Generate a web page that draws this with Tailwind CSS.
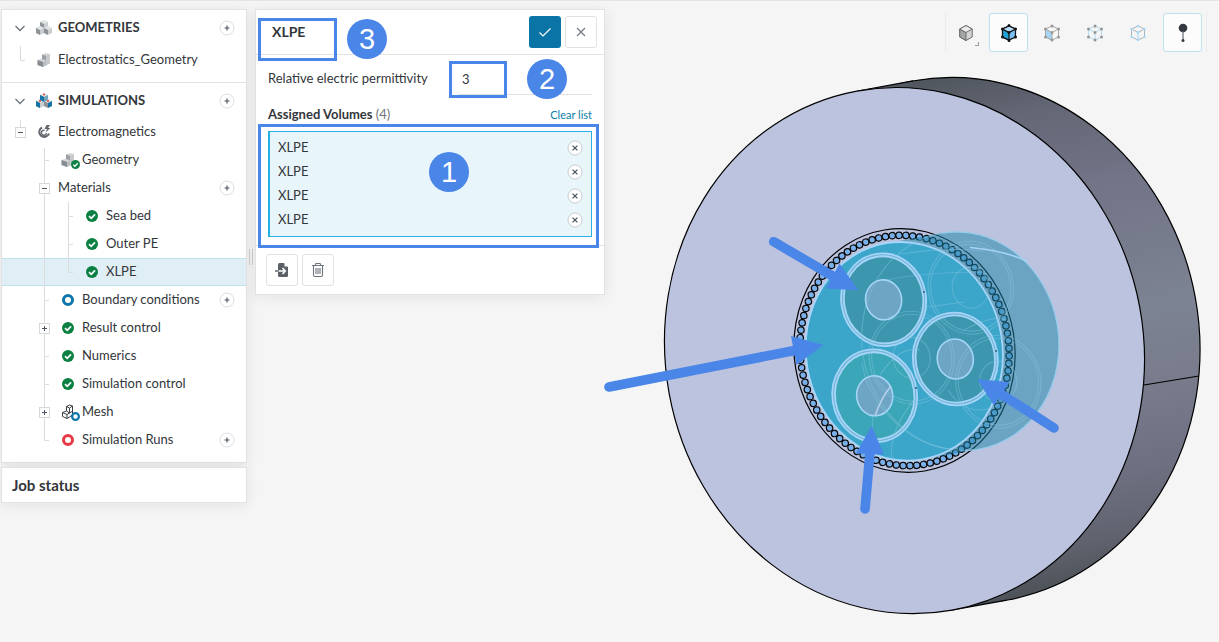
<!DOCTYPE html>
<html lang="en">
<head>
<meta charset="utf-8">
<meta name="viewport" content="width=device-width, initial-scale=1">
<title>Simulation workbench</title>
<script src="https://cdn.jsdelivr.net/npm/@tailwindcss/browser@4"></script>
</head>
<body class="min-h-screen bg-[#f5f5f5] font-['Lato',sans-serif] text-[13px] leading-4 text-[#33363b] border-t border-[#e4e4e4]">

<!-- Shared icon shapes -->
<svg class="hidden" aria-hidden="true">
  <symbol id="cube" viewBox="0 0 8 9"><path d="M4 0 8 2v5L4 9 0 7V2Z" fill="#c9cdcf"/><path d="M4 0 8 2 4 4 0 2Z" fill="#e3e6e7"/><path d="M0 2l4 2v5L0 7Z" fill="#8f9499"/></symbol>
  <symbol id="cubes" viewBox="0 0 16 16"><use href="#cube" x="4" y="0" width="8" height="9"/><use href="#cube" x="0" y="6" width="8" height="9"/><use href="#cube" x="8" y="6" width="8" height="9"/></symbol>
  <symbol id="part" viewBox="0 0 16 16"><path d="M6 2.500 10 1l4 1.300v9L7 15 1.500 13V8L6 6.500Z" fill="#d3d6d8"/><path d="M6 2.500l4 1.300v4.500L6 7Z" fill="#9aa0a5"/><path d="M10 3.800l4-1.500v9l-4 2.200Z" fill="#c6cacd"/><path d="M1.500 8 7 10v5l-5.500-2Z" fill="#878d93"/><path d="M7 10l3-1.500v5L7 15Z" fill="#b9bec1"/></symbol>
  <symbol id="ok" viewBox="0 0 12 12"><circle cx="6" cy="6" r="6" fill="#0b8043"/><path d="M3 6.200 5.200 8.300 9 4.300" fill="none" stroke="#fff" stroke-width="1.700"/></symbol>
  <symbol id="ring" viewBox="0 0 12 12"><circle cx="6" cy="6" r="4.500" fill="#fff" stroke="currentColor" stroke-width="3"/></symbol>
  <symbol id="plus" viewBox="0 0 16 16"><circle cx="8" cy="8" r="7" fill="#fff" stroke="#dcdee0"/><path d="M5.500 8h5M8 5.500v5" stroke="#4d5661" stroke-width="1.200"/></symbol>
  <symbol id="remove" viewBox="0 0 16 16"><circle cx="8" cy="8" r="7" fill="#fff" stroke="#c9cdd1"/><path d="m5.600 5.600 4.800 4.800m0-4.800-4.800 4.800" stroke="#4d5661" stroke-width="1.300"/></symbol>
  <symbol id="chev" viewBox="0 0 24 28"><path d="m7.500 12 4.500 4.500L16.500 12" fill="none" stroke="#6d747b" stroke-width="1.300"/></symbol>
  <!-- Tree guides -->
  <symbol id="tee" viewBox="0 0 24 28"><path d="M12.500 0v28M12.500 14.500H17" fill="none" stroke="#dcdcdc"/></symbol>
  <symbol id="bar" viewBox="0 0 24 28"><path d="M12.500 0v28" stroke="#dcdcdc"/></symbol>
  <symbol id="elbow" viewBox="0 0 24 28"><path d="M12.500 0v14.500H17" fill="none" stroke="#dcdcdc"/></symbol>
  <symbol id="boxm" viewBox="0 0 24 28"><rect x="7.500" y="9.500" width="10" height="10" fill="#fff" stroke="#d6d8da"/><path d="M10 14.500h5" stroke="#4d5661"/></symbol>
  <symbol id="boxp" viewBox="0 0 24 28"><rect x="7.500" y="9.500" width="10" height="10" fill="#fff" stroke="#d6d8da"/><path d="M10 14.500h5M12.500 12v5" stroke="#4d5661"/></symbol>
</svg>

<div class="relative flex min-h-[641px] items-start">

  <!-- Project tree -->
  <aside class="ml-px mt-2 w-[246px] shrink-0">
    <nav class="border border-[#e2e2e2] bg-white pb-2 shadow-[0_2px_14px_rgba(0,0,0,0.08)]">
      <div class="flex h-9 items-center pl-[6px] pr-[11px]">
        <svg class="h-7 w-6"><use href="#chev"/></svg>
        <span class="flex w-6 justify-center"><svg class="h-4 w-4"><use href="#cubes"/></svg></span>
        <span class="mb-0.5 ml-0.5 flex-1 font-bold">GEOMETRIES</span>
        <button class="h-4 w-4" aria-label="Add geometry"><svg class="h-4 w-4"><use href="#plus"/></svg></button>
      </div>
      <div class="mb-2 flex h-7 items-center pl-[6px]">
        <svg class="h-7 w-6"><use href="#elbow"/></svg>
        <span class="flex w-6 justify-center"><svg class="h-4 w-4"><use href="#part"/></svg></span>
        <a href="#" class="mb-0.5 ml-0.5">Electrostatics_Geometry</a>
      </div>
      <div class="flex h-9 items-center border-t border-[#e2e2e2] pl-[6px] pr-[11px]">
        <svg class="h-7 w-6"><use href="#chev"/></svg>
        <span class="flex w-6 justify-center"><svg class="h-4 w-4" viewBox="0 0 16 16"><use href="#cubes"/><path d="M4 2l4 2v5L4 7ZM0 8l4 2v5l-4-2ZM12 10l4-2v5l-4 2Z" fill="#1573a8"/><path d="M12 2 8 4v5l4-2Z" fill="#75a5bd"/><g fill="#e8402f"><circle cx="8" cy="1.500" r="1"/><circle cx="4" cy="8" r="1"/><circle cx="12" cy="8" r="1"/></g></svg></span>
        <span class="mb-0.5 ml-0.5 flex-1 font-bold">SIMULATIONS</span>
        <button class="h-4 w-4" aria-label="Add simulation"><svg class="h-4 w-4"><use href="#plus"/></svg></button>
      </div>
      <div class="flex h-7 items-center pl-[6px]">
        <svg class="h-7 w-6" viewBox="0 0 24 28"><path d="M12.500 2v8" stroke="#dcdcdc"/><use href="#boxm" width="24" height="28"/></svg>
        <span class="flex w-6 justify-center"><svg class="h-4 w-4" viewBox="0 0 16 16" fill="none" stroke="#63686e"><path d="M6 3.500A5 5 0 1 0 13 9.500" stroke-width="2"/><path d="M8.500 6.200a2.600 2.600 0 1 0 2 3" stroke-width="1.500"/><path d="M10.500 1 8.500 5h2.500L9.500 8.500 14.500 4H12l2-3Z" fill="#63686e" stroke="none"/></svg></span>
        <a href="#" class="mb-0.5 ml-0.5">Electromagnetics</a>
      </div>
      <div class="flex h-7 items-center pl-[30px]">
        <svg class="h-7 w-6" viewBox="0 0 24 28"><path d="M12.500 2v26M12.500 14.500H17" stroke="#dcdcdc" fill="none"/></svg>
        <span class="relative flex w-6 justify-center"><svg class="h-4 w-4"><use href="#part"/></svg><svg class="absolute right-0 top-2 h-[9px] w-[9px]"><use href="#ok"/></svg></span>
        <a href="#" class="mb-0.5 ml-0.5">Geometry</a>
      </div>
      <div class="flex h-7 items-center pl-[30px] pr-[11px]">
        <svg class="h-7 w-6" viewBox="0 0 24 28"><use href="#bar" width="24" height="28"/><use href="#boxm" width="24" height="28"/></svg>
        <a href="#" class="mb-0.5 ml-0.5 flex-1">Materials</a>
        <button class="h-4 w-4" aria-label="Add material"><svg class="h-4 w-4"><use href="#plus"/></svg></button>
      </div>
      <div class="flex h-7 items-center pl-[30px]">
        <svg class="h-7 w-6"><use href="#bar"/></svg><svg class="h-7 w-6"><use href="#tee"/></svg>
        <span class="flex w-6 justify-center"><svg class="h-3 w-3"><use href="#ok"/></svg></span>
        <a href="#" class="mb-0.5 ml-0.5">Sea bed</a>
      </div>
      <div class="flex h-7 items-center pl-[30px]">
        <svg class="h-7 w-6"><use href="#bar"/></svg><svg class="h-7 w-6"><use href="#tee"/></svg>
        <span class="flex w-6 justify-center"><svg class="h-3 w-3"><use href="#ok"/></svg></span>
        <a href="#" class="mb-0.5 ml-0.5">Outer PE</a>
      </div>
      <div class="flex h-7 items-center border-y border-[#bfdfec] bg-[#e0eef5] pl-[30px]">
        <svg class="h-7 w-6"><use href="#bar"/></svg><svg class="h-7 w-6"><use href="#elbow"/></svg>
        <span class="flex w-6 justify-center"><svg class="h-3 w-3"><use href="#ok"/></svg></span>
        <a href="#" class="mb-0.5 ml-0.5" aria-current="true">XLPE</a>
      </div>
      <div class="flex h-7 items-center pl-[30px] pr-[11px]">
        <svg class="h-7 w-6"><use href="#tee"/></svg>
        <span class="flex w-6 justify-center text-[#0f76ab]"><svg class="h-3 w-3"><use href="#ring"/></svg></span>
        <a href="#" class="mb-0.5 ml-0.5 flex-1">Boundary conditions</a>
        <button class="h-4 w-4" aria-label="Add boundary condition"><svg class="h-4 w-4"><use href="#plus"/></svg></button>
      </div>
      <div class="flex h-7 items-center pl-[30px]">
        <svg class="h-7 w-6" viewBox="0 0 24 28"><use href="#bar" width="24" height="28"/><use href="#boxp" width="24" height="28"/></svg>
        <span class="flex w-6 justify-center"><svg class="h-3 w-3"><use href="#ok"/></svg></span>
        <a href="#" class="mb-0.5 ml-0.5">Result control</a>
      </div>
      <div class="flex h-7 items-center pl-[30px]">
        <svg class="h-7 w-6"><use href="#tee"/></svg>
        <span class="flex w-6 justify-center"><svg class="h-3 w-3"><use href="#ok"/></svg></span>
        <a href="#" class="mb-0.5 ml-0.5">Numerics</a>
      </div>
      <div class="flex h-7 items-center pl-[30px]">
        <svg class="h-7 w-6"><use href="#tee"/></svg>
        <span class="flex w-6 justify-center"><svg class="h-3 w-3"><use href="#ok"/></svg></span>
        <a href="#" class="mb-0.5 ml-0.5">Simulation control</a>
      </div>
      <div class="flex h-7 items-center pl-[30px]">
        <svg class="h-7 w-6" viewBox="0 0 24 28"><use href="#bar" width="24" height="28"/><use href="#boxp" width="24" height="28"/></svg>
        <span class="relative flex w-6 justify-center text-[#0f76ab]"><svg class="h-4 w-4" viewBox="0 0 16 16" fill="none" stroke="#3c4045" stroke-width="1"><path d="M6.500 2.500 9.500 1l3 1v9L7 14.500l-4.500-2v-4L6.500 7Z"/><path d="M6.500 2.500 9.500 4l3-2M9.500 4v5M2.500 8.500 7 10.500l5-3M7 10.500v4M6.500 2.500V7l3 2"/></svg><svg class="absolute right-0 top-2 h-[9px] w-[9px]"><use href="#ring"/></svg></span>
        <a href="#" class="mb-0.5 ml-0.5">Mesh</a>
      </div>
      <div class="flex h-7 items-center pl-[30px] pr-[11px]">
        <svg class="h-7 w-6"><use href="#elbow"/></svg>
        <span class="flex w-6 justify-center text-[#e63946]"><svg class="h-3 w-3"><use href="#ring"/></svg></span>
        <a href="#" class="mb-0.5 ml-0.5 flex-1">Simulation Runs</a>
        <button class="h-4 w-4" aria-label="Add simulation run"><svg class="h-4 w-4"><use href="#plus"/></svg></button>
      </div>
    </nav>
    <section class="mt-1 flex h-9 items-center border border-[#e2e2e2] bg-white pl-[10px] shadow-[0_2px_14px_rgba(0,0,0,0.08)]">
      <h2 class="text-[15px] font-bold">Job status</h2>
    </section>
  </aside>

  <!-- Splitter handle -->
  <div class="mt-[248px] flex w-2 shrink-0 justify-center gap-0.5">
    <span class="h-4 w-px bg-[#cbcbcb]"></span><span class="h-4 w-px bg-[#cbcbcb]"></span>
  </div>

  <!-- Material settings -->
  <section class="relative mt-2 w-[350px] shrink-0 border border-[#e2e2e2] bg-white shadow-[0_2px_14px_rgba(0,0,0,0.08)]">
    <header class="flex h-[45px] items-center gap-1 border-b border-[#e2e2e2] pl-4 pr-[7px]">
      <h1 class="flex-1 text-[14px] font-bold">XLPE</h1>
      <button class="flex h-8 w-8 items-center justify-center rounded-[3px] bg-[#0b74a6]" aria-label="Apply"><svg class="h-4 w-4" viewBox="0 0 16 16"><path d="m2.500 8.500 3.500 3.500 7.500-7.500" fill="none" stroke="#fff" stroke-width="1.200"/></svg></button>
      <button class="flex h-8 w-8 items-center justify-center rounded-[3px] border border-[#dfe1e3] bg-white" aria-label="Close"><svg class="h-4 w-4" viewBox="0 0 16 16"><path d="m4 4 8 8m0-8-8 8" stroke="#6d747b" stroke-width="1.100"/></svg></button>
    </header>
    <div class="flex items-center justify-between px-3 pt-2">
      <label for="perm" class="mb-0.5">Relative electric permittivity</label>
      <input id="perm" value="3" class="h-8 w-[134px] border-b border-[#dfe1e3] px-1 outline-none">
    </div>
    <div class="flex h-9 items-center justify-between px-3 pt-1">
      <h2 class="mb-0.5 font-bold">Assigned Volumes <span class="font-normal text-[#6d747b]">(4)</span></h2>
      <button class="text-[11px] text-[#0b7ea6]">Clear list</button>
    </div>
    <ul class="mx-3 border border-l-2 border-[#26b0e3] bg-[#e8f5fb] py-1 pl-2 pr-2">
      <li class="flex h-6 items-center justify-between"><span class="mb-0.5">XLPE</span><button class="h-4 w-4" aria-label="Remove XLPE 1"><svg class="h-4 w-4"><use href="#remove"/></svg></button></li>
      <li class="flex h-6 items-center justify-between"><span class="mb-0.5">XLPE</span><button class="h-4 w-4" aria-label="Remove XLPE 2"><svg class="h-4 w-4"><use href="#remove"/></svg></button></li>
      <li class="flex h-6 items-center justify-between"><span class="mb-0.5">XLPE</span><button class="h-4 w-4" aria-label="Remove XLPE 3"><svg class="h-4 w-4"><use href="#remove"/></svg></button></li>
      <li class="flex h-6 items-center justify-between"><span class="mb-0.5">XLPE</span><button class="h-4 w-4" aria-label="Remove XLPE 4"><svg class="h-4 w-4"><use href="#remove"/></svg></button></li>
    </ul>
    <footer class="mt-2 flex gap-1 border-t border-[#e2e2e2] px-[10px] py-2">
      <button class="flex h-8 w-8 items-center justify-center rounded-[3px] border border-[#dfe1e3]" aria-label="Import"><svg class="h-4 w-4" viewBox="0 0 16 16"><path d="M4 2.500Q4 1 5.500 1H10l4 4v8.500q0 1.500-1.500 1.500h-7Q4 15 4 13.500Z" fill="#5b6167"/><path d="M10.500 1v3.500H14Z" fill="#fff"/><path d="M4.500 9H11M8.500 6 11.300 9 8.500 12" fill="none" stroke="#fff" stroke-width="1.600"/><path d="M1 9h3" stroke="#5b6167" stroke-width="1.400"/></svg></button>
      <button class="flex h-8 w-8 items-center justify-center rounded-[3px] border border-[#dfe1e3]" aria-label="Delete"><svg class="h-4 w-4" viewBox="0 0 16 16" fill="none" stroke="#6d747b" stroke-width="1.100"><path d="M2 3.500h12M5.500 3.500V2.300Q5.500 1.500 6.300 1.500h3.400q.800 0 .800.800v1.200M3.500 3.500v9.500q0 1.500 1.500 1.500h6q1.500 0 1.500-1.500V3.500M6 6v6M8 6v6M10 6v6"/></svg></button>
    </footer>

    <!-- Step callouts lying over the form -->
    <div class="pointer-events-none absolute left-[2px] top-2 h-[43px] w-[79px] border-3 border-[#4a86e8]"></div>
    <div class="pointer-events-none absolute left-[193px] top-[51px] h-[37px] w-[58px] border-3 border-[#4a86e8]"></div>
    <div class="pointer-events-none absolute left-[2px] top-[114px] h-[124px] w-[341px] border-3 border-[#4a86e8]"></div>
    <div class="absolute left-[91px] top-[9px] flex size-10 items-center justify-center rounded-full bg-[#4a86e8] font-['Liberation_Sans',sans-serif] text-[29px] leading-10 text-white">3</div>
    <div class="absolute left-[271px] top-[49px] flex size-10 items-center justify-center rounded-full bg-[#4a86e8] font-['Liberation_Sans',sans-serif] text-[29px] leading-10 text-white">2</div>
    <div class="absolute left-[173px] top-[142px] flex size-10 items-center justify-center rounded-full bg-[#4a86e8] font-['Liberation_Sans',sans-serif] text-[29px] leading-10 text-white">1</div>
  </section>

  <!-- 3D viewport -->
  <main class="relative min-w-0 flex-1">
    <svg class="block h-auto w-full overflow-visible" viewBox="605 1 614 641" role="img" aria-label="Cable cross-section">
      <defs>
        <linearGradient id="side" gradientUnits="userSpaceOnUse" x1="960" y1="77" x2="960" y2="604">
          <stop offset="0" stop-color="#50565e"/><stop offset=".1" stop-color="#646775"/><stop offset=".25" stop-color="#727487"/><stop offset=".5" stop-color="#7c8392"/><stop offset=".64" stop-color="#797c8c"/><stop offset=".8" stop-color="#6e7081"/><stop offset=".92" stop-color="#60636e"/><stop offset="1" stop-color="#4d5258"/>
        </linearGradient>
        <g id="core">
          <ellipse rx="41" ry="45" stroke="#a6d5f8" stroke-width="4.600"/>
          <ellipse rx="41" ry="45" fill="none" stroke="#6fb2d6" stroke-width="1"/>
          <ellipse rx="18" ry="20" fill="#6ea4c4" stroke="#a6d5f8" stroke-width="1.600"/>
        </g>
        <g id="ghost" fill="none" stroke="#8ccbe6" stroke-opacity=".36" stroke-width="1.200">
          <ellipse rx="42.500" ry="46.500"/><ellipse rx="40" ry="43.500"/><ellipse rx="18.500" ry="20.500"/>
        </g>
      </defs>
      <!-- Outer body -->
      <g stroke="#000" stroke-width="1.200">
        <ellipse cx="960" cy="340.500" rx="239.200" ry="263.800" transform="rotate(-10.400 960 340.500)" fill="url(#side)"/>
        <path d="M857.600 91 913.100 80.900 1006.900 600.100 951.400 610.200Z" fill="url(#side)" stroke="none"/>
        <path d="M857.600 91 913.100 80.900M1006.900 600.100 951.400 610.200M1144 385 1199 376"/>
        <ellipse cx="904.500" cy="350.600" rx="239.200" ry="263.800" transform="rotate(-10.400 904.500 350.600)" fill="#bcc3de"/>
      </g>
      <!-- Armour -->
      <g transform="translate(904.500 350.500) rotate(-9.500)">
        <ellipse rx="110.300" ry="122.200" fill="#bcc3de" stroke="#000" stroke-width="1.200"/>
        <g id="beads" fill="#79b0ea" stroke="#050505" stroke-width="1.200"></g>
      </g>
      <!-- Selected volume seen through the body -->
      <g fill="#1c85aa" opacity=".5">
        <path d="M885.100 243.400 941.100 233.300 979.500 449.100 923.500 459.200Z"/>
        <ellipse cx="960.300" cy="341.200" rx="98.300" ry="109.600" transform="rotate(-9.500 960.300 341.200)"/>
      </g>
      <ellipse cx="960.300" cy="341.200" rx="98.300" ry="109.600" transform="rotate(-9.500 960.300 341.200)" fill="none" stroke="#9acdf0" stroke-width="1.100" pathLength="100" stroke-dasharray="27 48 25"/>
      <ellipse cx="904.300" cy="351.300" rx="98.300" ry="109.600" transform="rotate(-9.500 904.300 351.300)" fill="#3ba5ca" stroke="#a6d5f8" stroke-width="1.800"/>
      <use href="#core" transform="translate(883.600 299.800) rotate(-9)" fill="#3b96ae"/>
      <use href="#core" transform="translate(955.300 359) rotate(-9)" fill="#3b96ae"/>
      <use href="#core" transform="translate(874.700 395.800) rotate(-9)" fill="#3ba6b8"/>
      <!-- Far-end outlines -->
      <use href="#ghost" transform="translate(970.700 287.700) rotate(-9)"/>
      <use href="#ghost" transform="translate(911.700 357.700) rotate(-9)"/>
      <use href="#ghost" transform="translate(998.300 381.700) rotate(-9)"/>
      <g fill="none" stroke="#8ccbe6" stroke-opacity=".38" stroke-width="1.200">
        <ellipse cx="960.300" cy="341.200" rx="98.300" ry="109.600" transform="rotate(-9.500 960.300 341.200)"/>
        <path d="M900 254q45-7 85-3M886 280q40-8 95-8M920 308q30-4 44-6M862 362q5 40 46 71M907 432q20 15 44 17M873 417q-2 12 3 38M892 460q-4-30 24-62M948 390q20 30 50 15M880 375q20-30 40-25M964 330q30-16 42-10"/>
      </g>
      <path d="M970 247.500q35 3 57 14" fill="none" stroke="#a6d5f8" stroke-width="1.500"/>
      <path d="M891 386q-10 12-16 30" fill="none" stroke="#b4cfea" stroke-width="1.700"/>
      <g fill="#44788e"><rect x="923" y="291" width="2" height="2"/><rect x="995" y="350" width="2" height="2"/><rect x="915" y="387" width="2" height="2"/></g>
      <!-- Pointers -->
      <g stroke="#4a86e8" stroke-width="9.600" stroke-linecap="round"><path d="M773.700 241.700 836 278M609 387 797 350M1054 428 998 392M865 509 870 452"/></g>
      <g fill="#4a86e8"><path d="M858.300 290.300 839.500 263.500 826 288.500ZM823.300 345 791 336 796.500 365ZM977.300 379.300 1009.500 382 994 405.500ZM871.700 425.700 856 453.500 884 454.700Z"/></g>
    </svg>

    <div class="absolute right-3 top-3 flex gap-1 border-x border-[#ececec] pr-1" role="toolbar" aria-label="View">
      <button class="relative flex size-[39px] items-center justify-center" aria-label="Render mode"><svg class="size-5" viewBox="-10 -10 20 20" stroke="#6b6b6b"><path d="M0-7.500 6.200-4V4L0 7.500-6.200 4V-4Z" fill="#d4d6d6"/><path d="M-6.200-4 0-.500V7.500L-6.200 4Z" fill="#a3a6a6"/><path d="M-6.200-4 0-7.500 6.200-4 0-.500Z" fill="#ececec"/></svg><svg class="absolute bottom-1.5 right-1.5 size-1" viewBox="0 0 4 4"><path d="M3.500 0v3.500H0" fill="none" stroke="#999"/></svg></button>
      <button class="flex size-[39px] items-center justify-center rounded-[3px] border border-[#bfe0ee] bg-[#fcfcfc]" aria-label="Select volumes" aria-pressed="true"><svg class="size-5" viewBox="-10 -10 20 20" stroke="#111" stroke-width="1.200"><path d="M0-7 6.500-4V4L0 7-6.500 4V-4Z" fill="#79bff2"/><path d="M-6.500-4 0-.500V7L-6.500 4Z" fill="#22a3d8"/><path d="M-6.500-4 0-7 6.500-4 0-.500Z" fill="#b5dcf8"/><path d="M0-7.500v0M6.500-4v0M6.500 4v0M0 7.500v0M-6.500 4v0M-6.500-4v0M0-.500v0" stroke-width="3" stroke-linecap="round"/></svg></button>
      <button class="flex size-[39px] items-center justify-center" aria-label="Select faces"><svg class="size-5" viewBox="-10 -10 20 20" stroke="#a5a5a5" fill="#f8f8f8"><path d="M0-7 6.500-4V4L0 7-6.500 4V-4Z"/><path d="M-6.500-4 0-.500V7L-6.500 4Z" fill="#a8d5f7"/><path d="M0-.500 6.500-4" /><path d="M0-7v0M6.500-4v0M6.500 4v0M0 7v0M-6.500 4v0M-6.500-4v0M0-.500v0" stroke="#999" stroke-width="3" stroke-linecap="round"/></svg></button>
      <button class="flex size-[39px] items-center justify-center" aria-label="Select vertices"><svg class="size-5" viewBox="-10 -10 20 20" stroke="#b2dcef" fill="none"><path d="M0-7 6.500-4V4L0 7-6.500 4V-4L0-.500 6.500-4M0-7-6.500-4M0-.500V7"/><path d="M0-7v0M6.500-4v0M6.500 4v0M0 7v0M-6.500 4v0M-6.500-4v0M0-.500v0" stroke="#969696" stroke-width="3" stroke-linecap="round"/></svg></button>
      <button class="flex size-[39px] items-center justify-center" aria-label="Select edges"><svg class="size-5" viewBox="-10 -10 20 20" stroke="#aab4bb" fill="none"><path d="M0-7 6.500-4V4L0 7-6.500 4V-4ZM-6.500-4 0-.500 6.500-4"/><path d="M0-.500V7" stroke="#9fd3f5"/><path d="M0-7v0M6.500-4v0M6.500 4v0M0 7v0M-6.500 4v0M-6.500-4v0M0-.500v0" stroke="#a8daf7" stroke-width="2.600" stroke-linecap="round"/></svg></button>
      <button class="ml-0.5 flex size-[39px] items-center justify-center rounded-[3px] border border-[#bfe0ee] bg-[#fcfcfc]" aria-label="Probe" aria-pressed="true"><svg class="size-5" viewBox="-10 -10 20 20" fill="#333840"><circle cy="-5" r="4.300"/><path d="M0-2v10" stroke="#666b73" stroke-width="1.200"/><circle cy="7.500" r="1.500"/></svg></button>
    </div>
  </main>
</div>

<script>
  // Armour wires, spaced evenly along the elliptical ring
  const beads = document.getElementById('beads');
  const count = 96;
  for (let i = 0; i < count; i++) {
    const a = (i / count) * Math.PI * 2;
    const c = document.createElementNS('http://www.w3.org/2000/svg', 'circle');
    c.setAttribute('cx', 104.3 * Math.cos(a));
    c.setAttribute('cy', 115.5 * Math.sin(a));
    c.setAttribute('r', 3.2);
    beads.appendChild(c);
  }
</script>
</body>
</html>
